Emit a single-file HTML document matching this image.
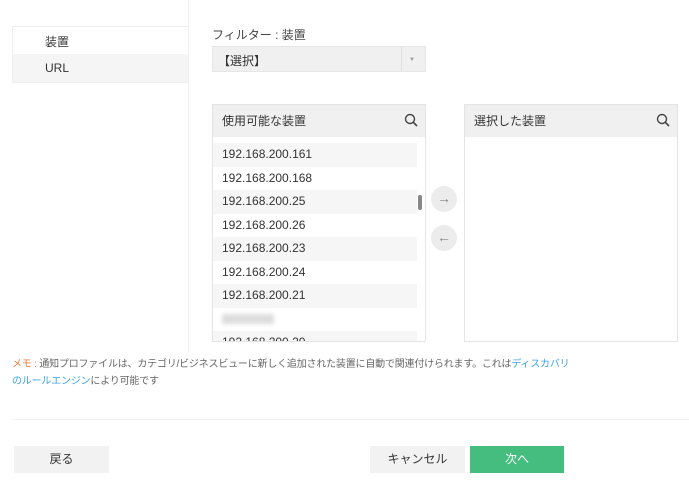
<!DOCTYPE html>
<html><head><meta charset="utf-8"><style>
*{margin:0;padding:0;box-sizing:border-box}
body{width:689px;height:482px;background:#fff;font-family:"Liberation Sans","Noto Sans CJK JP",sans-serif;font-size:12px;color:#333;position:relative;overflow:hidden}
.a{position:absolute}
.row{position:absolute;left:0;width:204px;height:23.5px;line-height:23.5px;padding-left:9px;font-size:12px;color:#333}
.g{background:#f6f6f6}
.btn{position:absolute;top:446px;height:27px;line-height:27px;text-align:center;font-size:12px;background:#f2f2f2;color:#333}
.circ{position:absolute;left:431px;width:26px;height:26px;border-radius:50%;background:#ececec;color:#888;text-align:center;line-height:25px;font-size:14px}
</style></head><body>
<div class="a" style="left:188px;top:0;width:1px;height:352px;background:#eee"></div>
<div class="a" style="left:12px;top:26px;width:177px;height:57px;border:1px solid #eee;border-right:none"></div>
<div class="a" style="left:13px;top:54px;width:175px;height:28px;background:#f5f5f5"></div>
<div class="a" style="left:45px;top:33px">装置</div>
<div class="a" style="left:45px;top:61px">URL</div>
<div class="a" style="left:212px;top:26px;color:#444">フィルター : 装置</div>
<div class="a" style="left:212px;top:46px;width:214px;height:26px;background:#f0f0f0;border:1px solid #e6e6e6"></div>
<div class="a" style="left:401px;top:47px;width:1px;height:24px;background:#e0e0e0"></div>
<div class="a" style="left:409px;top:57px;font-size:6px;color:#999">▼</div>
<div class="a" style="left:218px;top:52px">【選択】</div>
<div class="a" style="left:212px;top:104px;width:214px;height:238px;border:1px solid #e4e4e4;overflow:hidden">
 <div class="a" style="left:0;top:0;width:212px;height:32px;background:#f0f0f0;line-height:32px;padding-left:9px">使用可能な装置</div>
 <svg class="a" style="left:191px;top:8px" width="14" height="14" viewBox="0 0 14 14"><circle cx="6" cy="6" r="4.5" fill="none" stroke="#444" stroke-width="1.4"/><path d="M9.3 9.3L13 13" stroke="#444" stroke-width="1.6"/></svg>
 <div class="row g" style="top:38px">192.168.200.161</div>
 <div class="row" style="top:61.5px">192.168.200.168</div>
 <div class="row g" style="top:85px">192.168.200.25</div>
 <div class="row" style="top:108.5px">192.168.200.26</div>
 <div class="row g" style="top:132px">192.168.200.23</div>
 <div class="row" style="top:155.5px">192.168.200.24</div>
 <div class="row g" style="top:179px">192.168.200.21</div>
 <div class="row" style="top:202.5px"><span style="display:inline-block;width:52px;height:10px;background:#ddd;filter:blur(2px);vertical-align:middle"></span></div>
 <div class="row g" style="top:226px">192.168.200.20</div>
 <div class="a" style="left:205px;top:90px;width:4px;height:15px;border-radius:2px;background:#888"></div>
</div>
<div class="a" style="left:464px;top:104px;width:214px;height:238px;border:1px solid #e4e4e4">
 <div class="a" style="left:0;top:0;width:212px;height:32px;background:#f0f0f0;line-height:32px;padding-left:9px">選択した装置</div>
 <svg class="a" style="left:191px;top:8px" width="14" height="14" viewBox="0 0 14 14"><circle cx="6" cy="6" r="4.5" fill="none" stroke="#444" stroke-width="1.4"/><path d="M9.3 9.3L13 13" stroke="#444" stroke-width="1.6"/></svg>
</div>
<div class="circ" style="top:186px">→</div>
<div class="circ" style="top:225px">←</div>
<div class="a" style="left:12px;top:356px;font-size:10px;color:#666;line-height:17px;white-space:nowrap;letter-spacing:-0.2px"><span style="color:#f07a3a">メモ : </span>通知プロファイルは、カテゴリ/ビジネスビューに新しく追加された装置に自動で関連付けられます。これは<span style="color:#3ba3e8">ディスカバリ</span><br><span style="color:#3ba3e8">のルールエンジン</span>により可能です</div>
<div class="a" style="left:12px;top:419px;width:677px;height:1px;background:#f0f0f0"></div>
<div class="btn" style="left:14px;width:95px">戻る</div>
<div class="btn" style="left:370px;width:95px">キャンセル</div>
<div class="btn" style="left:470px;width:94px;background:#45bd7f;color:#fff">次へ</div>
</body></html>
